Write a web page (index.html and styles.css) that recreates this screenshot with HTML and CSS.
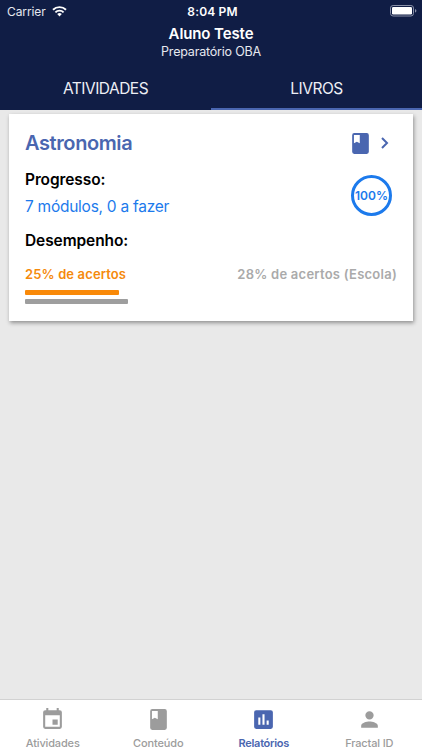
FILE: index.html
```html
<!DOCTYPE html>
<html lang="pt-BR">
<head>
<meta charset="utf-8">
<title>Relatórios</title>
<link rel="stylesheet" href="styles.css">
</head>
<body>
<div class="app">
  <header class="header">
    <div class="status">
      <div class="carrier"><span>Carrier</span>
        <svg class="wifi" viewBox="0 0 15 11"><path d="M7.5 10.5 5.2 8.1a3.3 3.3 0 0 1 4.6 0z" fill="#fff"/><path d="M3.4 6.3a5.8 5.8 0 0 1 8.2 0M1 3.8a9.3 9.3 0 0 1 13 0" fill="none" stroke="#fff" stroke-width="1.9"/></svg>
      </div>
      <div class="time">8:04 PM</div>
      <svg class="battery" viewBox="0 0 27 12"><rect x=".5" y=".5" width="23" height="10.5" rx="2.6" fill="none" stroke="#8990a8"/><rect x="2" y="2" width="20" height="7.5" rx="1.2" fill="#fff"/><path d="M25 4q1.4.4 1.4 1.8T25 7.6z" fill="#8990a8"/></svg>
    </div>
    <h1 class="name">Aluno Teste</h1>
    <div class="course">Preparatório OBA</div>
    <nav class="tabs">
      <div class="tab">ATIVIDADES</div>
      <div class="tab tab-on">LIVROS</div>
    </nav>
  </header>
  <main class="content">
    <section class="card">
      <div class="title-row">
        <h2 class="title">Astronomia</h2>
        <svg class="book" viewBox="0 0 24 24"><path fill="currentColor" d="M18 2H6a2 2 0 0 0-2 2v16a2 2 0 0 0 2 2h12a2 2 0 0 0 2-2V4a2 2 0 0 0-2-2zM5.700 3.800h5.600v8l-2.800-1.500-2.800 1.500z"/></svg>
        <svg class="chevron" viewBox="0 0 8 12"><path d="m1 1 5 5-5 5" fill="none" stroke="currentColor" stroke-width="2"/></svg>
      </div>
      <div class="progress-row">
        <div>
          <h3 class="label">Progresso:</h3>
          <div class="modules">7 módulos, 0 a fazer</div>
        </div>
        <div class="ring"><span>100%</span></div>
      </div>
      <h3 class="label perf-label">Desempenho:</h3>
      <div class="scores"><span class="mine">25% de acertos</span><span class="school">28% de acertos (Escola)</span></div>
      <div class="bar bar-mine"></div>
      <div class="bar bar-school"></div>
    </section>
  </main>
  <footer class="bottom">
    <div class="item">
      <svg class="icon" viewBox="0 0 24 24"><path fill="currentColor" d="M17 12h-5v5h5v-5zM16 1v2H8V1H6v2H5a2 2 0 0 0-2 2v14a2 2 0 0 0 2 2h14a2 2 0 0 0 2-2V5a2 2 0 0 0-2-2h-1V1h-2zm3 18H5V8h14v11z"/></svg>
      <span>Atividades</span>
    </div>
    <div class="item">
      <svg class="icon" viewBox="0 0 24 24"><path fill="currentColor" d="M18 2H6a2 2 0 0 0-2 2v16a2 2 0 0 0 2 2h12a2 2 0 0 0 2-2V4a2 2 0 0 0-2-2zM5.700 3.800h5.600v8l-2.800-1.500-2.800 1.500z"/></svg>
      <span>Conteúdo</span>
    </div>
    <div class="item item-on">
      <svg class="icon" viewBox="0 0 24 24"><path fill="currentColor" d="M19 3H5a2 2 0 0 0-2 2v14a2 2 0 0 0 2 2h14a2 2 0 0 0 2-2V5a2 2 0 0 0-2-2zM9 17H7v-7h2v7zm4 0h-2V7h2v10zm4 0h-2v-4h2v4z"/></svg>
      <span>Relatórios</span>
    </div>
    <div class="item">
      <svg class="icon" viewBox="0 0 24 24"><path fill="currentColor" d="M12 12a4 4 0 1 0 0-8 4 4 0 0 0 0 8zm0 2c-2.670 0-8 1.340-8 4v2h16v-2c0-2.660-5.330-4-8-4z"/></svg>
      <span>Fractal ID</span>
    </div>
  </footer>
</div>
</body>
</html>
```
FILE: styles.css
```css
* { box-sizing: border-box; }
body { margin: 0; font-family: Inter, "Liberation Sans", sans-serif; }
h1, h2, h3 { margin: 0; }
svg { display: block; flex: none; }
.app { width: 422px; height: 750px; display: flex; flex-direction: column; background: #e9e9e9; overflow: hidden; white-space: nowrap; }
.header { height: 110px; background: #101d45; color: #fff; display: flex; flex-direction: column; align-items: center; }
.header > * { flex: none; }
.status { width: 100%; height: 22px; display: grid; grid-template-columns: 1fr auto 1fr; align-items: center; padding: 0 5px 0 7px; }
.carrier { display: flex; align-items: center; gap: 6px; font-size: 12px; letter-spacing: -.1px; color: #e6e8ef; }
.wifi { width: 15px; height: 11px; }
.time { font-size: 12px; font-weight: 600; letter-spacing: .15px; padding-left: 1px; }
.battery { width: 27px; height: 12px; justify-self: end; }
.name { font-size: 15px; line-height: 20px; font-weight: 600; letter-spacing: -.1px; margin-top: 2px; }
.course { font-size: 12.500px; line-height: 16px; letter-spacing: -.2px; color: #e6e8ef; }
.tabs { width: 100%; height: 44px; margin-top: auto; display: grid; grid-template-columns: 1fr 1fr; }
.tab { height: 44px; text-align: center; font-size: 15.500px; line-height: 43px; letter-spacing: -.5px; color: #edeff5; border-bottom: 2px solid transparent; padding-top: 1px; }
.tab-on { border-color: #4a66b0; }
.content { flex: 1; padding: 4px 9px 0 8.500px; }
.card { height: 206.500px; background: #fff; box-shadow: 1px 2px 4px rgba(0,0,0,.38); padding: 16px 16px 0 16.500px; }
.title-row { display: flex; height: 26px; align-items: center; color: #4a66b0; }
.title { flex: 1; font-size: 20px; line-height: 24px; font-weight: 600; letter-spacing: -.4px; }
.book { width: 25px; height: 25px; margin-right: 8px; }
.chevron { width: 8px; height: 12px; margin-right: 8px; }
.progress-row { display: flex; justify-content: space-between; height: 61px; padding-top: 14px; }
.label { font-size: 15.500px; line-height: 20px; font-weight: 600; letter-spacing: -.1px; color: #000; }
.modules { font-size: 15.500px; line-height: 20px; letter-spacing: -.26px; color: #1c7aec; margin-top: 7px; }
.ring { width: 41px; height: 41px; margin: 4.500px 5px 0 0; border: 3px solid #1c7aec; border-radius: 50%; display: flex; align-items: center; justify-content: center; color: #1c7aec; font-size: 12px; font-weight: 600; }
.perf-label { margin-top: 14px; }
.scores { display: flex; justify-content: space-between; margin-top: 14px; font-size: 13px; line-height: 18px; font-weight: 600; }
.mine { color: #f58a0c; letter-spacing: .13px; }
.school { color: #aaa; letter-spacing: .25px; }
.bar { height: 5px; border-radius: 1px; }
.bar-mine { width: 93.500px; background: #f98908; margin-top: 7px; }
.bar-school { width: 103px; background: #9e9e9e; margin-top: 4px; }
.bottom { height: 51px; background: #fff; border-top: 1px solid #d2d2d2; display: grid; grid-template-columns: repeat(4, 1fr); }
.item { display: flex; flex-direction: column; align-items: center; color: #9c9c9c; font-size: 11px; font-weight: 500; line-height: 14px; letter-spacing: -.15px; padding-top: 6.500px; gap: 4px; }
.item-on { color: #4a66b0; }
.item-on span { font-weight: 600; letter-spacing: -.3px; }
.icon { width: 25px; height: 25px; }
```
